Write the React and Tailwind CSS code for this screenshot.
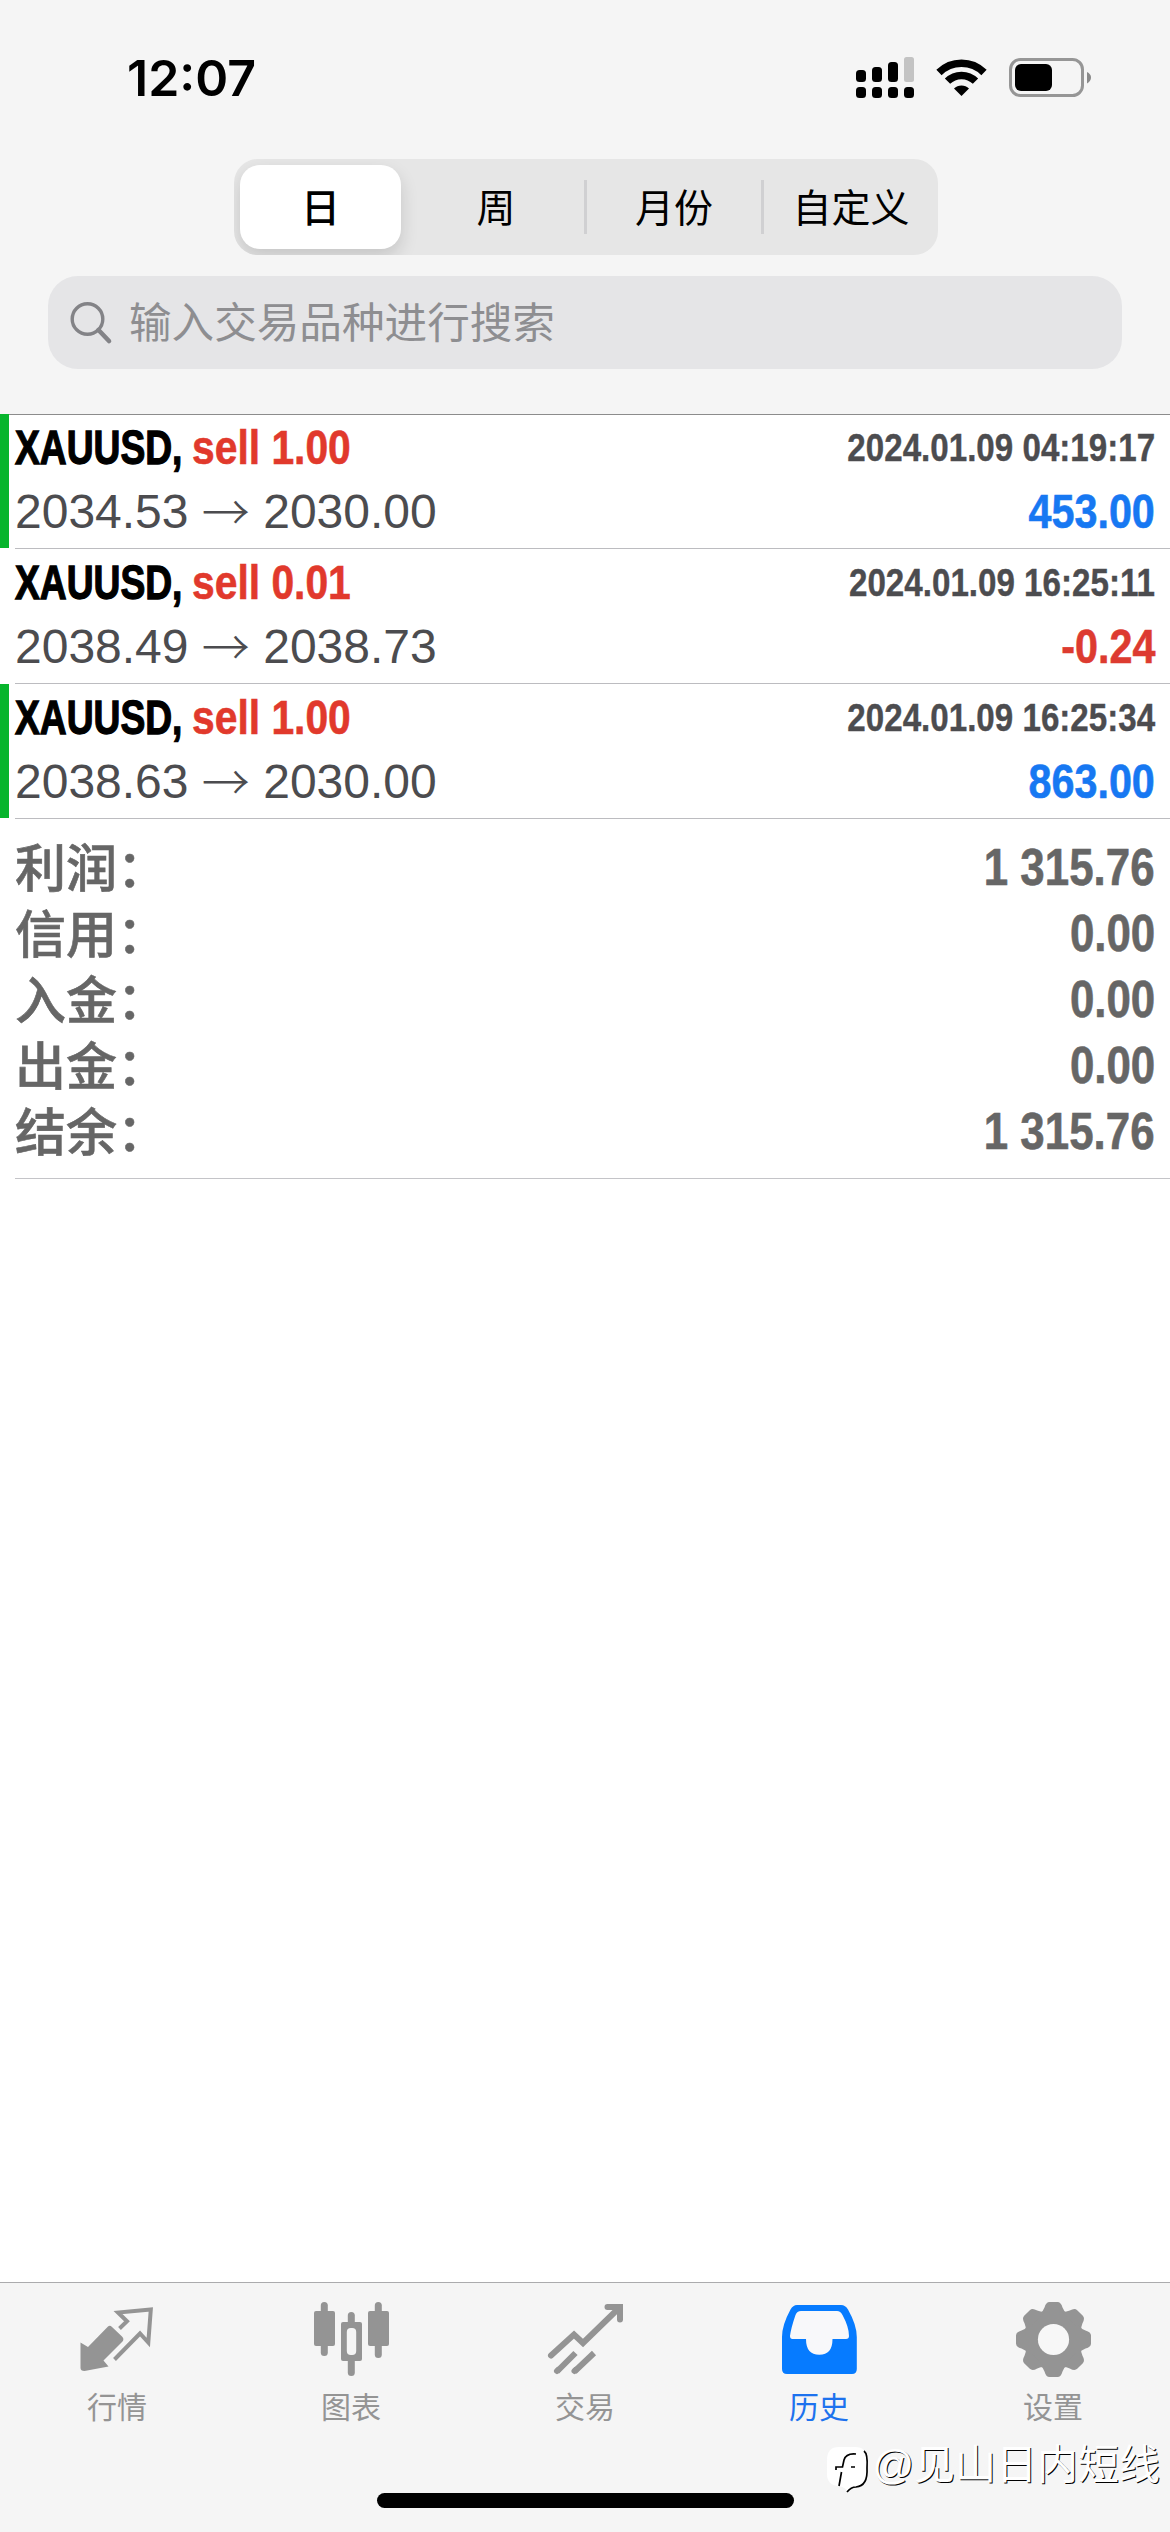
import React from "react";

const CJK = "font-['Liberation_Sans','Noto_Sans_CJK_SC',sans-serif]";

const trades = [
  { volume: "sell 1.00", open: "2034.53", close: "2030.00", time: "2024.01.09 04:19:17", profit: "453.00", up: true, mark: true },
  { volume: "sell 0.01", open: "2038.49", close: "2038.73", time: "2024.01.09 16:25:11", profit: "-0.24", up: false, mark: false },
  { volume: "sell 1.00", open: "2038.63", close: "2030.00", time: "2024.01.09 16:25:34", profit: "863.00", up: true, mark: true },
];

const totals = [
  ["利润：", "1 315.76"],
  ["信用：", "0.00"],
  ["入金：", "0.00"],
  ["出金：", "0.00"],
  ["结余：", "1 315.76"],
];

function StatusBar() {
  return (
    <div className="flex h-[156px] shrink-0 items-start justify-between pl-[127px] pr-[76px]">
      <span className="mt-[48px] font-['Inter'] text-[50px] font-semibold leading-[60px] text-black">12:07</span>
      <svg className="mt-[54px] h-[48px] w-[240px]" viewBox="854 54 240 48">
        <g fill="#000">
          <rect x="856" y="70" width="10" height="12" rx="3.5" />
          <rect x="872" y="67" width="10" height="15" rx="3.5" />
          <rect x="888" y="62" width="10" height="20" rx="3.5" />
          <rect x="904" y="57" width="10" height="25" rx="2.5" fill="#c3c3c3" />
          <rect x="856" y="87" width="10" height="11" rx="3.5" />
          <rect x="872" y="87" width="10" height="11" rx="3.5" />
          <rect x="888" y="87" width="10" height="11" rx="3.5" />
          <rect x="904" y="87" width="10" height="11" rx="3.5" />
        </g>
        <g fill="none" stroke="#000" strokeWidth="7.5">
          <path d="M939 72.5A32 32 0 0 1 984 72.5" />
          <path d="M947.500 81.200A19.800 19.800 0 0 1 975.500 81.200" />
        </g>
        <path d="M961.500 96L954 88.500A10.600 10.600 0 0 1 969 88.500Z" fill="#000" />
        <rect x="1010.500" y="59.500" width="72" height="36" rx="10" fill="none" stroke="#969696" strokeWidth="3" />
        <rect x="1015" y="64" width="37" height="27" rx="6" fill="#000" />
        <path d="M1087 72Q1091 74 1091 77.500Q1091 81 1087 83.500Z" fill="#8a8a8a" />
      </svg>
    </div>
  );
}

function Segments() {
  const cell = "flex h-[84px] shrink-0 items-center justify-center pt-[3px] text-[39px] leading-[56px] text-black";
  return (
    <div className="ml-[234px] mt-[3px] flex h-[96px] w-[704px] shrink-0 items-center overflow-hidden rounded-[24px] bg-[#e6e6e6] pl-[6px]">
      <div className={cell + " w-[161px] rounded-[20px] bg-white font-medium shadow-[0_8px_18px_rgba(0,0,0,0.14)]"}>日</div>
      <div className={cell + " ml-[7px] w-[176px]"}>周</div>
      <div className="h-[54px] w-[3px] shrink-0 bg-[#d0d0d2]" />
      <div className={cell + " w-[174px]"}>月份</div>
      <div className="h-[54px] w-[3px] shrink-0 bg-[#d0d0d2]" />
      <div className={cell + " w-[174px]"}>自定义</div>
    </div>
  );
}

function SearchBox() {
  return (
    <div className="mx-[48px] mt-[21px] flex h-[93px] shrink-0 items-center rounded-[30px] bg-[#e5e5e7] pl-[22px] text-[#8e8e91]">
      <svg className="h-[44px] w-[44px]" viewBox="0 0 44 44" fill="none" stroke="#838387">
        <circle cx="17.500" cy="18" r="15.300" strokeWidth="3.400" />
        <path d="M28.500 29L39 40" strokeWidth="4.600" strokeLinecap="round" />
      </svg>
      <span className="ml-[15px] text-[42.6px] leading-[60px]">输入交易品种进行搜索</span>
    </div>
  );
}

function Trade({ t }) {
  return (
    <div className="flex h-[135px]">
      <div className={t.mark ? "mb-px w-[9px] bg-[#07b52c]" : "w-[9px]"} />
      <div className="ml-[6px] flex flex-1 justify-between border-b border-[#bcbcc0] pr-[15px]">
        <div className="flex flex-col">
          <div className="mt-[5px] flex h-[58px] items-center whitespace-pre text-[48px] font-bold">
            <span className="w-[177px] origin-left scale-x-[0.775] text-black [-webkit-text-stroke:1.3px_#000]">XAUUSD,</span>
            <span className="origin-left scale-x-[0.85] text-[#e1392c] [-webkit-text-stroke:0.6px_#e1392c]">{t.volume}</span>
          </div>
          <div className="mt-[6px] flex h-[58px] items-center whitespace-pre text-[48px] text-[#4c4c4f]">
            <span>{t.open} </span>
            <span className="-mt-[6px] font-['Noto_Sans_CJK_SC'] font-light leading-[58px]">→</span>
            <span> {t.close}</span>
          </div>
        </div>
        <div className="flex flex-col items-end font-bold">
          <div className="mt-[5px] flex h-[58px] origin-right scale-x-[0.85] items-center text-[39px] text-[#4c4c4f] [-webkit-text-stroke:0.4px_#4c4c4f]">{t.time}</div>
          <div className={"mt-[6px] flex h-[58px] origin-right scale-x-[0.86] items-center text-[48px] " + (t.up ? "text-[#1778f2] [-webkit-text-stroke:0.6px_#1778f2]" : "text-[#dd3b30] [-webkit-text-stroke:0.6px_#dd3b30]")}>{t.profit}</div>
        </div>
      </div>
    </div>
  );
}

function Totals() {
  return (
    <div className="ml-[15px] flex h-[360px] flex-col border-b border-[#c4c4c8] pr-[15px] pt-[16px] text-[#666]">
      {totals.map(([name, value]) => (
        <div key={name} className="flex h-[66px] items-center justify-between">
          <span className="pt-[3px] text-[51px] font-medium leading-[66px] [-webkit-text-stroke:0.6px_#666]">{name}</span>
          <span className="origin-right scale-x-[0.86] text-[51px] font-bold leading-[66px] [-webkit-text-stroke:0.6px_#666]">{value}</span>
        </div>
      ))}
    </div>
  );
}

function QuotesIcon() {
  return (
    <svg className="h-[81px] w-[81px]" viewBox="76.500 2298 81 81">
      <path d="M80 2342.500L87.500 2347L107.500 2326.500Q109.500 2325 111.500 2327L121.500 2336.500Q124 2339 122 2341.500L103 2360.500L108 2366.500L84 2371Q80 2371 80 2368Z" fill="#949494" />
      <path d="M119 2328.500L126.500 2321.300L117.500 2312.500L150.300 2309.500L147.800 2342.500L139.500 2333.500L114 2359.500" fill="none" stroke="#949494" strokeWidth="4" />
    </svg>
  );
}

function ChartIcon() {
  return (
    <svg className="h-[81px] w-[81px]" viewBox="310 2298 81 81" fill="#949494">
      <rect x="319.800" y="2302" width="7" height="54" rx="3.500" />
      <rect x="313" y="2311" width="21" height="35" rx="2" />
      <rect x="373.800" y="2302" width="7" height="56" rx="3.500" />
      <rect x="367" y="2311" width="21" height="35" rx="2" />
      <rect x="346.800" y="2312" width="7" height="64" rx="3.500" />
      <rect x="340" y="2322" width="21" height="39" rx="2" />
      <rect x="345.800" y="2328" width="9.400" height="27" rx="4" fill="#f5f5f5" />
    </svg>
  );
}

function TradeIcon() {
  return (
    <svg className="h-[81px] w-[81px]" viewBox="544 2298 81 81" fill="none" stroke="#949494" strokeWidth="6" strokeLinecap="round">
      <path d="M550 2355.500L573 2334.500L582 2343L618 2308M606.500 2307H619V2319.500" />
      <path d="M556 2371.500L574.500 2353M573.500 2371.500L593 2353" strokeLinecap="butt" />
      <path d="M556 2371L557 2370M573.500 2371L574.500 2370" />
    </svg>
  );
}

function HistoryIcon() {
  return (
    <svg className="h-[81px] w-[81px]" viewBox="778 2298 81 81">
      <path d="M796 2305H840Q844.500 2305 847 2309.500Q855.800 2325 855.800 2337V2369Q855.800 2374 851 2374H786Q781 2374 781 2369V2337Q781 2325 789.500 2309.500Q792 2305 796 2305Z" fill="#067bff" />
      <path d="M800 2311H836Q839.500 2311 841.500 2315Q848 2327 848 2336Q848 2339 845 2339H831.500Q831.500 2354.800 818.300 2354.800Q805 2354.800 805 2339H791.500Q789 2339 789 2336Q790 2328 794.500 2315Q796 2311 800 2311Z" fill="#f8f8fa" />
    </svg>
  );
}

function SettingsIcon() {
  return (
    <svg className="h-[81px] w-[81px]" viewBox="-40.500 -41.500 81 81">
      <g fill="#949494">
        <circle r="29.500" />
        {[0, 45, 90, 135, 180, 225, 270, 315].map((a) => (
          <path key={a} transform={`rotate(${a})`} d="M-14 -25Q-10.500 -28 -9 -32Q-7.500 -37.500 -4 -37.500H4Q7.500 -37.500 9 -32Q10.500 -28 14 -25Z" />
        ))}
      </g>
      <circle r="15.600" fill="#f7f7f7" />
    </svg>
  );
}

const tabs = [
  ["行情", QuotesIcon],
  ["图表", ChartIcon],
  ["交易", TradeIcon],
  ["历史", HistoryIcon],
  ["设置", SettingsIcon],
];

function TabBar() {
  return (
    <div className="relative flex h-[250px] shrink-0 flex-col items-center border-t border-[#ababad] bg-[#f5f5f5]">
      <div className="grid w-full grid-cols-5 pt-[15px]">
        {tabs.map(([name, Icon]) => (
          <div key={name} className={"flex flex-col items-center " + (name === "历史" ? "text-[#1d72ee]" : "text-[#949494]")}>
            <Icon />
            <span className="mt-[9px] text-[30px] leading-[40px]">{name}</span>
          </div>
        ))}
      </div>
      <div className="mb-[24px] mt-auto h-[15px] w-[417px] rounded-full bg-black" />
      <div className="absolute right-[10px] top-[152px] flex items-center">
        <svg className="mt-[9px] h-[48px] w-[44px]" viewBox="0 0 44 48">
          <path d="M13 1H29Q41 1 41 14V28Q41 40 30 41Q25 41 21 46Q20 41 12 40Q1 39 1 28V14Q1 1 13 1Z" fill="#fff" />
          <path d="M38 5Q42 8 41 22Q42 40 30 41Q25 41 21 46" fill="none" stroke="#000" strokeWidth="1.700" />
          <path d="M30 8Q20 7 18 14L16.500 21H10V24M15.500 26L13 40M25 21H29" fill="none" stroke="#000" strokeWidth="1.700" />
        </svg>
        <span className="ml-[2px] text-[41px] leading-[60px] text-white [text-shadow:1px_1px_0_#000]">@见山日内短线</span>
      </div>
    </div>
  );
}

export default function App() {
  return (
    <div className={"flex h-[2532px] w-[1170px] flex-col overflow-hidden bg-white " + CJK}>
      <header className="flex h-[415px] shrink-0 flex-col border-b border-[#8c8c8c] bg-[#f5f5f5]">
        <StatusBar />
        <Segments />
        <SearchBox />
      </header>
      <main className="-mt-px flex-1">
        {trades.map((t) => (
          <Trade key={t.time} t={t} />
        ))}
        <Totals />
      </main>
      <TabBar />
    </div>
  );
}
